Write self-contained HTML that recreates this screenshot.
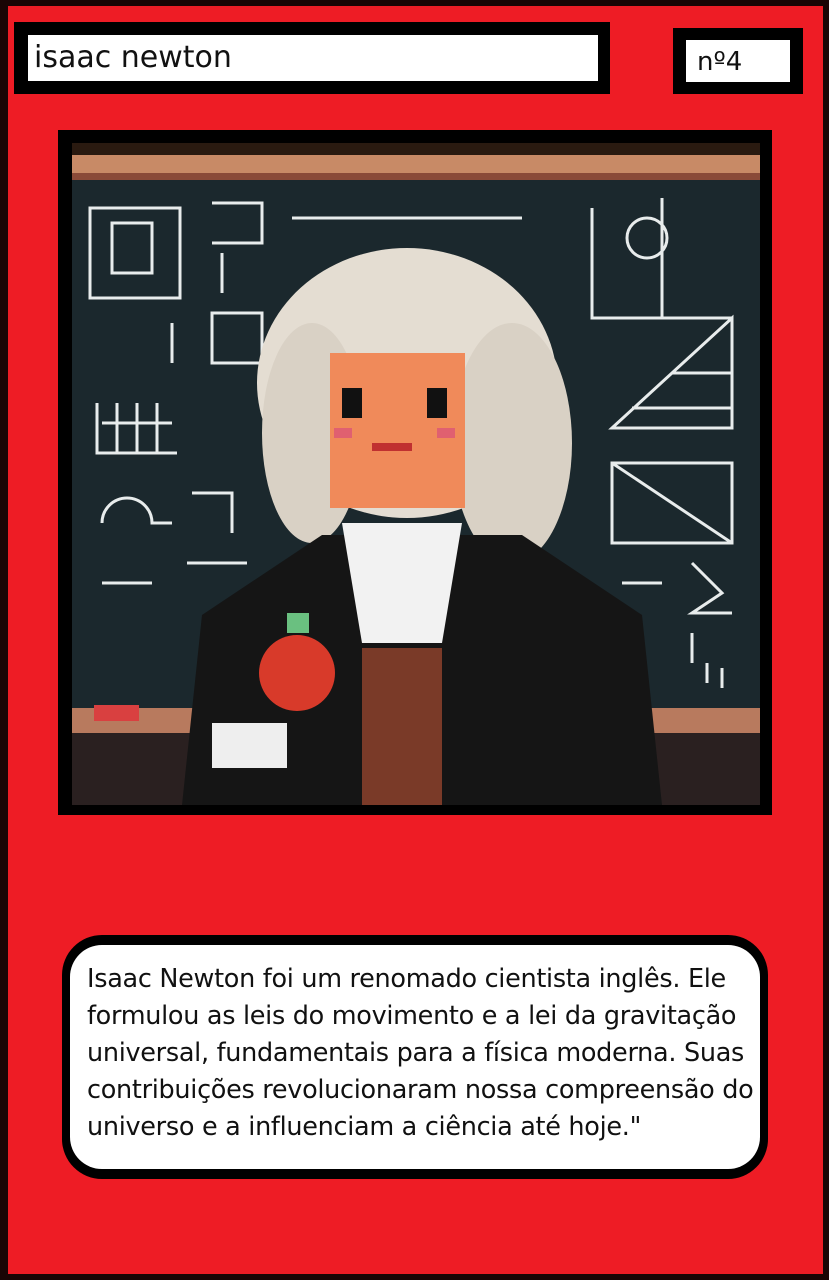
<!DOCTYPE html><html><head><style>
body{margin:0;width:829px;height:1280px;background:#1a0505;overflow:hidden;font-family:"DejaVu Sans","Liberation Sans",sans-serif}
.card{position:absolute;left:8px;top:6px;width:815px;height:1268px;background:#ee1c25}
.abs{position:absolute}
</style></head><body>
<div class="card"></div>
<div class="abs" style="left:14px;top:22px;width:596px;height:72px;background:#000"></div>
<div class="abs" style="left:28px;top:35px;width:570px;height:46px;background:#fff;font-size:30px;line-height:46px;padding-left:6px;box-sizing:border-box;color:#111">isaac newton</div>
<div class="abs" style="left:673px;top:28px;width:130px;height:66px;background:#000"></div>
<div class="abs" style="left:686px;top:40px;width:104px;height:42px;background:#fff;font-size:26px;line-height:44px;padding-left:11px;box-sizing:border-box;color:#111">nº4</div>
<div class="abs" style="left:58px;top:130px;width:714px;height:685px;background:#000"></div>
<svg class="abs" style="left:72px;top:143px" width="688" height="662" viewBox="0 0 688 662">
<rect width="688" height="662" fill="#1b282d"/>
<rect y="0" width="688" height="12" fill="#2a1a10"/>
<rect y="12" width="688" height="25" fill="#c88a66"/>
<rect y="30" width="688" height="7" fill="#8a4a38"/>
<rect y="565" width="688" height="25" fill="#b87a5e"/>
<rect x="22" y="562" width="45" height="16" fill="#d94040"/>
<rect y="590" width="688" height="72" fill="#2a2020"/>
<g stroke="#e8ecec" stroke-width="3" fill="none">
<rect x="18" y="65" width="90" height="90"/><path d="M40 80h40v50h-40zM140 60h50v40h-50M150 110v40M25 260v50h80M30 280h70M45 260v50M65 260v50M85 260v50M30 380a25 25 0 0 1 50 0h20M30 440h50M220 75h230M520 65v110h140M520 175h140M590 55v120M555 95a20 20 0 1 0 40 0a20 20 0 1 0 -40 0M540 285l120-110v110zM560 265h100M600 230h60M540 320h120v80h-120zM540 320l120 80M550 440h40M620 420l30 30-30 20h40M620 490v30M635 520v20M650 525v20M100 180v40M140 170h50v50h-50zM120 350h40v40M115 420h60M130 485h30"/>
</g>
<ellipse cx="335" cy="240" rx="150" ry="135" fill="#e4ddd2"/>
<ellipse cx="240" cy="290" rx="50" ry="110" fill="#d9d1c5"/>
<ellipse cx="440" cy="300" rx="60" ry="120" fill="#d9d1c5"/>
<rect x="258" y="210" width="135" height="155" fill="#f08a5a"/>
<rect x="270" y="245" width="20" height="30" fill="#111"/><rect x="355" y="245" width="20" height="30" fill="#111"/>
<rect x="262" y="285" width="18" height="10" fill="#e06070"/><rect x="365" y="285" width="18" height="10" fill="#e06070"/>
<rect x="300" y="300" width="40" height="8" fill="#c03030"/>
<path d="M110 662l20-190 120-80h200l120 80 20 190z" fill="#151515"/>
<path d="M270 380h120l-20 120h-80z" fill="#f2f2f2"/>
<rect x="290" y="505" width="80" height="157" fill="#7a3a28"/>
<circle cx="225" cy="530" r="38" fill="#d83a2a"/>
<rect x="215" y="470" width="22" height="20" fill="#6ac080"/>
<rect x="140" y="580" width="75" height="45" fill="#eeeeee"/>
</svg>
<div class="abs" style="left:62px;top:935px;width:706px;height:244px;background:#000;border-radius:40px"></div>
<div class="abs" style="left:70px;top:945px;width:690px;height:224px;background:#fff;border-radius:32px;box-sizing:border-box;padding:16px 0 0 17px;font-size:25.5px;line-height:37px;color:#111;letter-spacing:-0.3px;white-space:nowrap">Isaac Newton foi um renomado cientista inglês. Ele<br>formulou as leis do movimento e a lei da gravitação<br>universal, fundamentais para a física moderna. Suas<br>contribuições revolucionaram nossa compreensão do<br>universo e a influenciam a ciência até hoje."</div>
</body></html>
